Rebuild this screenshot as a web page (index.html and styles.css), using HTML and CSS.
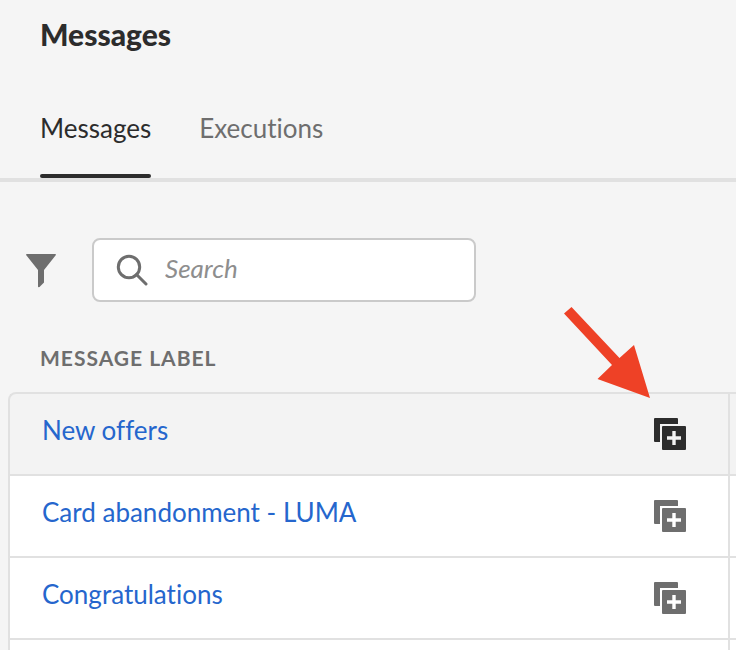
FILE: index.html
```html
<!DOCTYPE html>
<html lang="en">
<head>
<meta charset="utf-8">
<meta name="viewport" content="width=device-width, initial-scale=1">
<title>Messages</title>
<link rel="stylesheet" href="styles.css">
</head>
<body>
<svg class="sprite" aria-hidden="true">
  <symbol id="duplicate" viewBox="0 0 32 32">
    <path d="M1 0H23a1 1 0 0 1 1 1V6H6V24H1a1 1 0 0 1-1-1V1a1 1 0 0 1 1-1Z"/>
    <path fill-rule="evenodd" d="M9 8H31a1 1 0 0 1 1 1V31a1 1 0 0 1-1 1H9a1 1 0 0 1-1-1V9a1 1 0 0 1 1-1ZM18.3 13V18.3H13V21.7H18.3V27H21.7V21.7H27V18.3H21.7V13Z"/>
  </symbol>
</svg>
<main class="page">
  <header class="header">
    <h1 class="title">Messages</h1>
    <nav class="tabs">
      <a class="tab tab-active" href="#messages" aria-current="page">Messages</a>
      <a class="tab" href="#executions">Executions</a>
    </nav>
  </header>
  <div class="toolbar">
    <button class="filter" type="button" aria-label="Filter">
      <svg width="30" height="34" viewBox="0 0 30 34"><path d="M0.5 0H29.5q.7.6 0 1.500L18 16V28.500L13.500 33q-1.500.5-1.500-.5V16L.5 1.500Q-.2.6.5 0Z"/></svg>
    </button>
    <label class="search">
      <svg width="32" height="32" viewBox="0 0 32 32" aria-hidden="true"><circle cx="13" cy="13" r="10.700"/><path d="M20.500 20.500L30 30"/></svg>
      <input class="search-input" type="search" placeholder="Search" aria-label="Search">
    </label>
  </div>
  <table class="messages">
    <thead>
      <tr><th class="label-head" colspan="3" scope="col">MESSAGE LABEL</th></tr>
    </thead>
    <tbody>
      <tr class="row row-hover">
        <td class="cell cell-label"><a href="#new-offers">New offers</a></td>
        <td class="cell cell-action"><button class="duplicate" type="button" aria-label="Duplicate New offers"><svg width="32" height="32"><use href="#duplicate"/></svg></button></td>
        <td class="cell cell-next"></td>
      </tr>
      <tr class="row">
        <td class="cell cell-label"><a href="#card-abandonment">Card abandonment - LUMA</a></td>
        <td class="cell cell-action"><button class="duplicate" type="button" aria-label="Duplicate Card abandonment - LUMA"><svg width="32" height="32"><use href="#duplicate"/></svg></button></td>
        <td class="cell cell-next"></td>
      </tr>
      <tr class="row">
        <td class="cell cell-label"><a href="#congratulations">Congratulations</a></td>
        <td class="cell cell-action"><button class="duplicate" type="button" aria-label="Duplicate Congratulations"><svg width="32" height="32"><use href="#duplicate"/></svg></button></td>
        <td class="cell cell-next"></td>
      </tr>
      <tr class="row">
        <td class="cell cell-label"></td>
        <td class="cell cell-action"></td>
        <td class="cell cell-next"></td>
      </tr>
    </tbody>
  </table>
  <svg class="pointer" width="88" height="92" viewBox="0 0 88 92" aria-hidden="true"><path d="M0 7.500L7.500 1L55.500 52L70 39L86 92L33.500 73L48 59Z"/></svg>
</main>
</body>
</html>
```
FILE: styles.css
```css
* {
  box-sizing: border-box;
}

body {
  margin: 0;
  background: #f5f5f5;
  color: #2c2c2c;
  font: 26px/32px Lato, "Noto Sans", sans-serif;
  font-variant-ligatures: none;
}

a {
  color: inherit;
  text-decoration: none;
}

button {
  padding: 0;
  border: 0;
  background: none;
}

svg {
  display: block;
  fill: currentColor;
}

.sprite {
  position: absolute;
  width: 0;
  height: 0;
}

.page {
  position: relative;
  height: 100vh;
  overflow: hidden;
}

.header {
  padding: 18px 40px 0;
  border-bottom: 4px solid #e1e1e1;
}

.title {
  margin: 0;
  font-size: 30px;
  line-height: 32px;
  font-weight: 900;
}

.tabs {
  display: flex;
  gap: 48px;
  padding-top: 62px;
}

.tab {
  position: relative;
  padding-bottom: 34px;
  color: #6e6e6e;
}

.tab-active {
  color: #2c2c2c;
}

.tab-active::after {
  content: "";
  position: absolute;
  left: 0;
  right: 0;
  bottom: 0;
  height: 4px;
  border-radius: 2px;
  background: #2c2c2c;
}

.toolbar {
  display: flex;
  align-items: center;
  gap: 36px;
  padding: 56px 26px 0;
}

.filter {
  padding-top: 2px;
  color: #6e6e6e;
}

.search {
  display: flex;
  align-items: center;
  gap: 17px;
  width: 384px;
  height: 64px;
  padding: 0 22px;
  border: 2px solid #cacaca;
  border-radius: 8px;
  background: #fff;
  color: #6e6e6e;
}

.search svg {
  flex: none;
  fill: none;
  stroke: currentColor;
  stroke-width: 3;
  stroke-linecap: round;
}

.search-input {
  flex: 1;
  min-width: 0;
  padding: 0 0 4px;
  border: 0;
  outline: 0;
  background: none;
  color: #2c2c2c;
  font: inherit;
}

.search-input::placeholder {
  color: #8e8e8e;
  font-style: italic;
  opacity: 1;
}

.messages {
  width: calc(100% - 8px);
  margin-left: 8px;
  border-spacing: 0;
}

.label-head {
  height: 90px;
  padding: 22px 32px 0;
  color: #6e6e6e;
  font-size: 21px;
  line-height: 24px;
  font-weight: 700;
  letter-spacing: 1px;
  text-align: left;
}

.cell {
  height: 82px;
  padding: 0;
  border-top: 2px solid #e1e1e1;
  background: #fff;
}

.cell-label {
  padding: 20px 0 0 32px;
  border-left: 2px solid #e1e1e1;
  color: #2566cd;
  vertical-align: top;
}

.cell-action {
  width: 74px;
}

.cell-next {
  width: 8px;
  border-left: 2px solid #e1e1e1;
}

.row-hover .cell {
  background: #f3f3f3;
}

.row-hover .cell-label {
  border-top-left-radius: 8px;
}

.duplicate {
  display: block;
  color: #6e6e6e;
}

.row-hover .duplicate {
  color: #2c2c2c;
}

.pointer {
  position: absolute;
  left: 564px;
  top: 306px;
  fill: #ee4126;
}
```
